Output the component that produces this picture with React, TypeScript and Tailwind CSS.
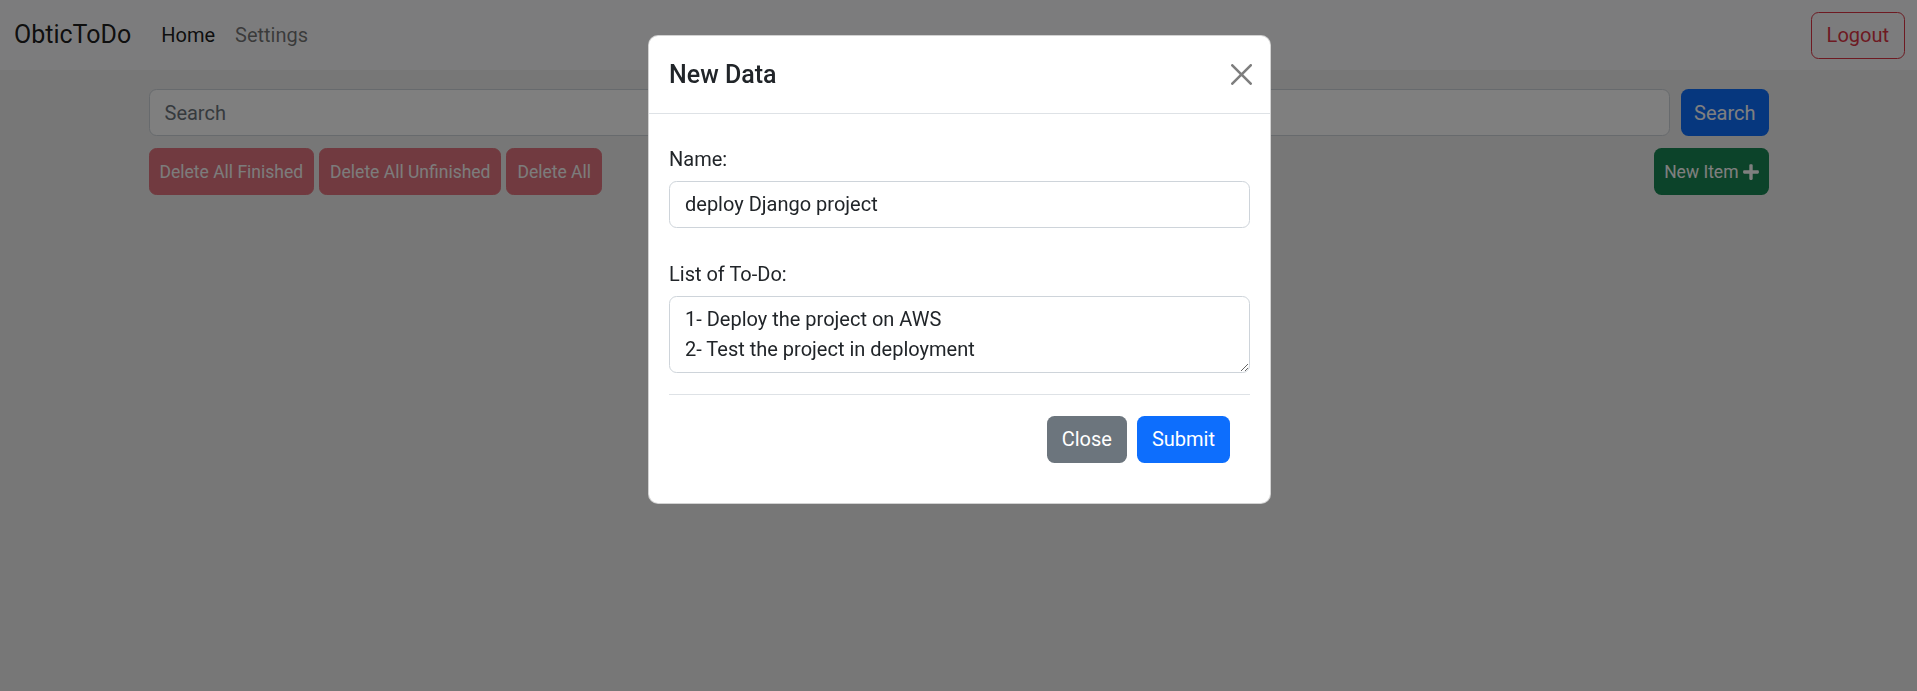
function PlusIcon() {
  return (
    <svg viewBox="0 0 448 512" className="h-[18px] w-[16px] fill-white" aria-hidden="true">
      <path d="M416 208H272V64c0-17.67-14.33-32-32-32h-32c-17.67 0-32 14.33-32 32v144H32c-17.67 0-32 14.33-32 32v32c0 17.67 14.33 32 32 32h144v144c0 17.67 14.33 32 32 32h32c17.67 0 32-14.33 32-32V304h144c17.67 0 32-14.33 32-32v-32c0-17.67-14.33-32-32-32z" />
    </svg>
  );
}

function CloseIcon() {
  return (
    <svg viewBox="0 0 16 16" className="h-[21px] w-[21px] fill-black" aria-hidden="true">
      <path d="M.293.293a1 1 0 0 1 1.414 0L8 6.586 14.293.293a1 1 0 1 1 1.414 1.414L9.414 8l6.293 6.293a1 1 0 0 1-1.414 1.414L8 9.414l-6.293 6.293a1 1 0 0 1-1.414-1.414L6.586 8 .293 1.707a1 1 0 0 1 0-1.414z" />
    </svg>
  );
}

export default function App() {
  const deleteButtons = ['Delete All Finished', 'Delete All Unfinished', 'Delete All'];

  return (
    <div className="min-h-screen bg-[#efefef] font-['Roboto',sans-serif] text-[20px] leading-[30px] text-[#212529]">
      <nav className="flex h-[70px] items-center justify-between bg-[#f8f9fa] pl-[14px] pr-[12px]">
        <div className="flex items-center">
          <a className="mr-[20px] text-[25px] leading-[37.5px] text-black/90">ObticToDo</a>
          <a className="px-[10px] text-black/90">Home</a>
          <a className="px-[10px] text-black/[0.55]">Settings</a>
        </div>
        <button className="h-[47px] rounded-[7.5px] border border-[#dc3545] px-[15px] text-[#dc3545]">Logout</button>
      </nav>

      <div className="mx-auto max-w-[1650px] px-[15px]">
        <div className="mt-[19px] flex gap-[11px]">
          <input
            className="h-[47px] flex-1 rounded-[7.5px] border border-[#ced4da] bg-white px-[15px] placeholder:text-[#6c757d]"
            placeholder="Search"
          />
          <button className="h-[47px] rounded-[7.5px] bg-[#0d6efd] px-[13px] text-white">Search</button>
        </div>

        <div className="mt-[12px] flex justify-between">
          <div className="flex gap-[5px]">
            {deleteButtons.map((label) => (
              <button
                key={label}
                disabled
                className="h-[47px] rounded-[7.5px] border border-[#dc3545] bg-[#dc3545] px-[10px] text-[17.5px] text-white opacity-65"
              >
                {label}
              </button>
            ))}
          </div>
          <button className="flex h-[47px] items-center gap-[4px] rounded-[7.5px] bg-[#198754] px-[10px] text-[17.5px] text-white">
            New Item <PlusIcon />
          </button>
        </div>
      </div>

      <div className="fixed inset-0 bg-black/50">
        <div className="mx-auto mt-[35px] w-[623px] translate-x-[1px] rounded-[10px] border border-black/[0.175] bg-white">
          <div className="flex items-center justify-between border-b border-[#dee2e6] px-[20px] pb-[19px] pt-[20px]">
            <h5 className="text-[25px] font-medium leading-[37.5px]">New Data</h5>
            <button className="-my-[10px] -mr-[7px] p-[5px] opacity-50">
              <CloseIcon />
            </button>
          </div>

          <div className="px-[20px] pb-[40px] pt-[30px]">
            <label className="block">Name:</label>
            <input
              className="mt-[7px] block h-[47px] w-full rounded-[7.5px] border border-[#ced4da] px-[15px]"
              defaultValue="deploy Django project"
            />
            <label className="mt-[31px] block">List of To-Do:</label>
            <textarea
              rows={2}
              className="mt-[7px] block h-[77px] w-full rounded-[7.5px] border border-[#ced4da] px-[15px] py-[7.5px]"
              defaultValue={'1- Deploy the project on AWS\n2- Test the project in deployment'}
            />
            <hr className="mt-[21px] border-[#dee2e6]" />
            <div className="mt-[21px] flex justify-end gap-[10px] pr-[20px]">
              <button className="h-[47px] rounded-[7.5px] bg-[#6c757d] px-[15px] text-white">Close</button>
              <button className="h-[47px] rounded-[7.5px] bg-[#0d6efd] px-[15px] text-white">Submit</button>
            </div>
          </div>
        </div>
      </div>
    </div>
  );
}
